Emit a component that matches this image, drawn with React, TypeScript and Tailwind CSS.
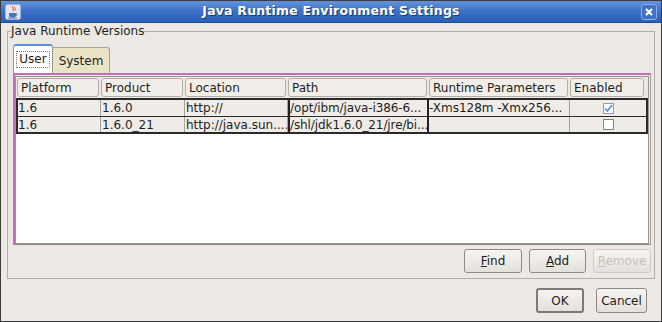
import React from 'react';

const font = { fontFamily: '"DejaVu Sans", Verdana, sans-serif' };

const cols = [
  { name: 'Platform', w: 'w-[84px]' },
  { name: 'Product', w: 'w-[84px]' },
  { name: 'Location', w: 'w-[103px]' },
  { name: 'Path', w: 'w-[141px]' },
  { name: 'Runtime Parameters', w: 'w-[141px]' },
  { name: 'Enabled', w: 'w-[76px]' },
];

const rows = [
  { platform: '1.6', product: '1.6.0', location: 'http://', path: '/opt/ibm/java-i386-6...', params: '-Xms128m -Xmx256...', enabled: true },
  { platform: '1.6', product: '1.6.0_21', location: 'http://java.sun....', path: '/shl/jdk1.6.0_21/jre/bi...', params: '', enabled: false },
];

function JavaIcon() {
  return (
    <svg width="16" height="16" viewBox="0 0 16 16">
      <rect x="0.5" y="0.5" width="15" height="15" rx="2" fill="#dfe6f2" stroke="#9fb3d6" />
      <path d="M8 2c-2 2 2 3 0 5M10 3c-1 1.5 1 2 0 3.5" stroke="#e0782a" strokeWidth="1.2" fill="none" />
      <path d="M4 9h7v2.5c0 1.2-1 2-2 2H6c-1 0-2-.8-2-2z" fill="#4a74b8" />
      <path d="M11 9.5c1.5 0 1.5 2 0 2" stroke="#4a74b8" fill="none" />
      <rect x="3" y="13.5" width="9" height="1" fill="#4a74b8" />
    </svg>
  );
}

function Btn({ children, w, disabled }: { children: React.ReactNode; w: string; disabled?: boolean }) {
  return (
    <div
      className={`${w} h-[24px] flex items-center justify-center rounded-[3px] border text-[12px] ${
        disabled ? 'border-[#cfcbc4] text-[#c4c0ba]' : 'border-[#8d8a84] text-[#1e1e1e]'
      } bg-gradient-to-b from-[#f7f5f2] to-[#e4e1dc]`}
    >
      {children}
    </div>
  );
}

export default function App() {
  return (
    <div className="w-[662px] h-[322px] flex flex-col bg-[#ece9e4] border border-[#3c3c3c] overflow-hidden" style={font}>
      {/* title bar */}
      <div className="h-[22px] shrink-0 flex items-center px-[4px] bg-gradient-to-b from-[#6393dc] via-[#3a70c6] to-[#2d60b6] border-b border-[#1f4a94]">
        <JavaIcon />
        <div
          className="flex-1 text-center text-white font-bold text-[12.5px] tracking-[0.2px]"
          style={{ textShadow: '1px 1px 0 #1a3a70' }}
        >
          Java Runtime Environment Settings
        </div>
        <div className="w-[16px] h-[16px] rounded-[3px] border border-[#8fb2e6] bg-[#3f72c4] flex items-center justify-center">
          <svg width="10" height="10" viewBox="0 0 10 10">
            <path d="M2 2l6 6M8 2l-6 6" stroke="white" strokeWidth="2.2" />
          </svg>
        </div>
      </div>

      {/* group box */}
      <fieldset className="mx-[6px] mt-[1px] h-[255px] border border-[#b3afa8] pl-[5px] pr-[3px] flex flex-col">
        <legend className="text-[12px] leading-[14px] text-[#1e1e1e] ml-[-2px] px-0">Java Runtime Versions</legend>

        {/* tabs */}
        <div className="mt-[6px] flex items-end h-[29px]">
          <div className="w-[40px] h-[29px] bg-white border border-[#9a968f] border-b-0 border-t-2 border-t-[#5b8fd8] rounded-t-[3px] flex items-center justify-center">
            <span className="border border-dotted border-[#777] px-[2px] leading-[15px] text-[12px] text-[#1e1e1e]">User</span>
          </div>
          <div className="w-[57px] h-[26px] bg-[#ebe3c6] border border-[#aaa49a] border-b-0 border-l-0 rounded-tr-[3px] flex items-center justify-center text-[12px] text-[#1e1e1e]">
            System
          </div>
        </div>

        {/* tab panel */}
        <div className="h-[172px] border-t-2 border-l-2 border-r border-b border-t-[#c46cbd] border-l-[#c46cbd] border-r-[#a5a19a] border-b-[#8a867f] flex pt-[1px] pl-[0px] pr-[1px] pb-[0px]">
          <div className="flex-1 border border-[#9b978f] bg-white flex flex-col">
            {/* header */}
            <div className="flex bg-[#ece9e4] pt-[1px] pb-[1px]">
              {cols.map((c) => (
                <div key={c.name} className={`${c.w} h-[19px] px-[1px]`}>
                  <div className="h-full rounded-[3px] border border-[#b3afa8] bg-[#f1eeea] flex items-center px-[3px] text-[12px] text-[#1e1e1e] whitespace-nowrap overflow-hidden">
                    {c.name}
                  </div>
                </div>
              ))}
            </div>
            {/* rows */}
            {rows.map((r, i) => (
              <div key={i} className={`flex h-[18px] bg-[#efece8] border-x-2 border-[#2a2a2a] ${i === 0 ? 'border-t-2' : 'border-t'} ${i === 1 ? 'border-b-2' : ''}`}>
                <div className="w-[83px] border-r border-[#a7a39c] text-[12px] leading-[16px] text-[#1e1e1e] whitespace-nowrap overflow-hidden">{r.platform}</div>
                <div className="w-[84px] border-r border-[#a7a39c] text-[12px] leading-[16px] text-[#1e1e1e] pl-[1px] whitespace-nowrap overflow-hidden">{r.product}</div>
                <div className="w-[103px] border-r border-[#a7a39c] text-[12px] leading-[16px] text-[#1e1e1e] pl-[1px] whitespace-nowrap overflow-hidden">{r.location}</div>
                <div className="w-[141px] border-x-2 border-[#222] text-[12px] leading-[16px] text-[#1e1e1e] tracking-[-0.1px] whitespace-nowrap overflow-hidden">{r.path}</div>
                <div className="w-[141px] border-r border-[#a7a39c] text-[12px] leading-[16px] text-[#1e1e1e] whitespace-nowrap overflow-hidden">{r.params}</div>
                <div className="flex-1 flex items-center justify-center">
                  <div className={`w-[11px] h-[11px] border ${r.enabled ? 'border-[#b08ac8]' : 'border-[#8a867f]'} bg-white flex items-center justify-center`}>
                    {r.enabled && (
                      <svg width="9" height="9" viewBox="0 0 9 9">
                        <path d="M1 4.5l2.5 2.5L8 1" stroke="#4a8fdc" strokeWidth="1.6" fill="none" />
                      </svg>
                    )}
                  </div>
                </div>
              </div>
            ))}
          </div>
        </div>

        {/* buttons inside group */}
        <div className="mt-[4px] flex justify-end gap-[7px]">
          <Btn w="w-[58px]">
            <span><span className="underline">F</span>ind</span>
          </Btn>
          <Btn w="w-[57px]">
            <span><span className="underline">A</span>dd</span>
          </Btn>
          <Btn w="w-[58px]" disabled>
            <span><span className="underline">R</span>emove</span>
          </Btn>
        </div>
      </fieldset>

      {/* dialog buttons */}
      <div className="mt-[9px] flex justify-end gap-[12px] pr-[14px]">
        <div className="w-[48px] h-[25px] flex items-center justify-center rounded-[3px] border-2 border-[#7d7a74] bg-gradient-to-b from-[#f7f5f2] to-[#e4e1dc] text-[12px] text-[#1e1e1e]">
          OK
        </div>
        <div className="w-[51px] h-[25px] flex items-center justify-center rounded-[3px] border border-[#8d8a84] bg-gradient-to-b from-[#f7f5f2] to-[#e4e1dc] text-[12px] text-[#1e1e1e]">
          Cancel
        </div>
      </div>
    </div>
  );
}
